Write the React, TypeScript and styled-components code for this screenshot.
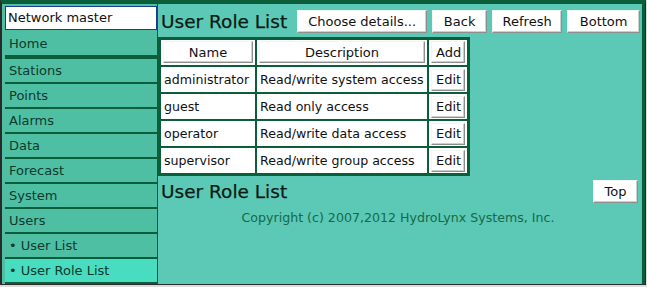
import React from "react";
import styled, { createGlobalStyle } from "styled-components";

const GlobalStyle = createGlobalStyle`
  html, body {
    margin: 0;
    padding: 0;
    background: #dcdcdc;
  }
  body {
    font-family: "DejaVu Sans", Verdana, sans-serif;
  }
`;

const Frame = styled.div`
  width: 643px;
  height: 280px;
  border: 1px solid #2a2a2a;
  border-left-width: 2px;
  border-top: 4px solid #0b5e3a;
  display: flex;
  background: #4fbfa4;
  overflow: hidden;
`;

const Sidebar = styled.nav`
  width: 153px;
  padding: 2px 0 0 2px;
  display: flex;
  flex-direction: column;
  background: #4fbfa4;
`;

const StationBox = styled.div`
  height: 22px;
  margin: 0 0 2px 1px;
  border: 1px solid #1a3a8c;
  background: #fff;
  font-size: 13px;
  line-height: 22px;
  padding-left: 2px;
  color: #111;
`;

const NavItem = styled.div<{ $active?: boolean; $thick?: boolean }>`
  height: 23px;
  margin-left: 1px;
  border-bottom: ${(p) => (p.$thick ? "4px" : "2px")} solid #0b5e3a;
  background: ${(p) => (p.$active ? "#48dcc0" : "#4fbfa4")};
  color: #0e3a2a;
  font-size: 13px;
  line-height: 23px;
  padding-left: 4px;
`;

const Main = styled.main`
  flex: 1;
  background: #5cc8b6;
  border-left: 1px solid #0b5e3a;
  border-right: 3px solid #0b5e3a;
  padding: 5px 0 0 0;
  display: flex;
  flex-direction: column;
`;

const HeaderRow = styled.div`
  display: flex;
  align-items: center;
  gap: 5px;
  height: 25px;
`;

const Title = styled.h1<{ $grow?: boolean }>`
  margin: 0 5px 0 3px;
  font-size: 18.5px;
  font-weight: 500;
  color: #0a1a14;
  -webkit-text-stroke: 0.25px #0a1a14;
  flex: ${(p) => (p.$grow ? 1 : "none")};
`;

const Button = styled.button<{ $w?: number }>`
  height: 23px;
  width: ${(p) => (p.$w ? `${p.$w}px` : "auto")};
  padding: 0 4px;
  font-family: "DejaVu Sans", Verdana, sans-serif;
  font-size: 13px;
  color: #111;
  background: #fff;
  border: 1px solid;
  border-color: #f4f4f4 #8e8e8e #8e8e8e #f4f4f4;
  box-shadow: inset -1px -1px 0 #cfcfcf;
`;

const Table = styled.table`
  margin-top: 3px;
  width: 310px;
  table-layout: fixed;
  border: 1px solid #0b5e3a;
  background: #0b5e3a;
  border-spacing: 2px;
`;

const HeadCell = styled.th<{ $w: number }>`
  width: ${(p) => p.$w}px;
  box-sizing: border-box;
  background: #fff;
  padding: 1px 2px 2px;
  font-weight: normal;
`;

const HeadButton = styled(Button)`
  width: 100%;
  height: 22px;
  display: block;
`;

const Cell = styled.td`
  background: #fff;
  height: 25px;
  padding: 0 3px;
  font-size: 12.6px;
  color: #111;
  white-space: nowrap;
  overflow: hidden;
`;

const EditCell = styled(Cell)`
  padding: 0 2px;
`;

const Footer = styled.div`
  margin-top: 4px;
  display: flex;
  align-items: center;
  padding-right: 4px;
`;

const Copyright = styled.p`
  margin: 7px 0 0;
  text-align: center;
  font-size: 12.6px;
  color: #156a48;
  padding-right: 4px;
`;

const roles = [
  { name: "administrator", description: "Read/write system access" },
  { name: "guest", description: "Read only access" },
  { name: "operator", description: "Read/write data access" },
  { name: "supervisor", description: "Read/write group access" },
];

const navItems = ["Stations", "Points", "Alarms", "Data", "Forecast", "System", "Users", "• User List"];

const App: React.FC = () => {
  return (
    <>
      <GlobalStyle />
      <Frame>
        <Sidebar>
          <StationBox>Network master</StationBox>
          <NavItem $thick>Home</NavItem>
          {navItems.map((item) => (
            <NavItem key={item}>{item}</NavItem>
          ))}
          <NavItem $active>• User Role List</NavItem>
        </Sidebar>
        <Main>
          <HeaderRow>
            <Title>User Role List</Title>
            <Button $w={130}>Choose details...</Button>
            <Button $w={55}>Back</Button>
            <Button $w={70}>Refresh</Button>
            <Button $w={73}>Bottom</Button>
          </HeaderRow>
          <Table>
            <thead>
              <tr>
                <HeadCell $w={94}>
                  <HeadButton>Name</HeadButton>
                </HeadCell>
                <HeadCell $w={170}>
                  <HeadButton>Description</HeadButton>
                </HeadCell>
                <HeadCell $w={38}>
                  <HeadButton>Add</HeadButton>
                </HeadCell>
              </tr>
            </thead>
            <tbody>
              {roles.map((role) => (
                <tr key={role.name}>
                  <Cell>{role.name}</Cell>
                  <Cell>{role.description}</Cell>
                  <EditCell>
                    <HeadButton>Edit</HeadButton>
                  </EditCell>
                </tr>
              ))}
            </tbody>
          </Table>
          <Footer>
            <Title $grow>User Role List</Title>
            <Button $w={45}>Top</Button>
          </Footer>
          <Copyright>Copyright (c) 2007,2012 HydroLynx Systems, Inc.</Copyright>
        </Main>
      </Frame>
    </>
  );
};

export default App;
